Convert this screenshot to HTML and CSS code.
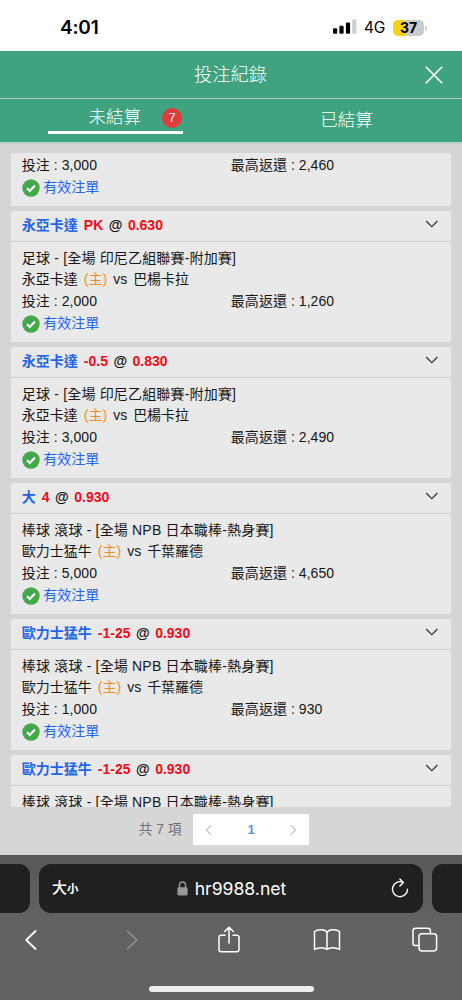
FILE: index.html
```html
<!DOCTYPE html>
<html lang="zh-Hant">
<head>
<meta charset="utf-8">
<meta name="viewport" content="width=device-width, initial-scale=1">
<title>投注紀錄</title>
<link rel="stylesheet" href="styles.css">
</head>
<body>
<svg class="defs" width="0" height="0">
  <symbol id="check" viewBox="0 0 18 18"><circle cx="9" cy="9" r="8.7" fill="#46a84c"/><path d="M5 9.3l2.8 2.7 5.2-5.4" fill="none" stroke="#fff" stroke-width="2.2"/></symbol>
  <symbol id="down" viewBox="0 0 14 8"><path d="M1.2 1l5.6 5.7L12.4 1" fill="none" stroke="#333" stroke-width="1.2"/></symbol>
</svg>
<div class="status">
  <span class="time">4:01</span>
  <svg class="signal" width="24" height="16" viewBox="0 0 24 16"><rect x="0" y="9.3" width="4.2" height="5.5" rx="1.2"/><rect x="6.4" y="6.8" width="4.2" height="8" rx="1.2"/><rect x="12.9" y="3.6" width="4.2" height="11.2" rx="1.2"/><rect x="19.2" y="0.2" width="4.2" height="14.6" rx="1.2" fill="#cfcfcf"/></svg>
  <span class="net">4G</span>
  <span class="battery">37</span><i class="nub"></i>
</div>
<header class="header">
  <h1>投注紀錄</h1>
  <svg class="close" width="18" height="18" viewBox="0 0 18 18"><path d="M.8.8l16.4 16.4M17.2.8L.8 17.2" stroke="#fff" stroke-width="1.6"/></svg>
</header>
<nav class="tabs">
  <div class="tab"><div class="active"><span>未結算</span><b class="badge">7</b></div></div>
  <div class="tab second">已結算</div>
</nav>
<main class="page">
  <div class="list">
    <section class="card partial">
      <div class="body">
        <div class="row split"><span>投注 : 3,000</span><span>最高返還 : 2,460</span></div>
        <div class="row valid"><svg><use href="#check"/></svg>有效注單</div>
      </div>
    </section>
    <section class="card">
      <div class="title"><span class="pick">永亞卡達</span><span class="red">PK</span><span class="at">@</span><span class="red">0.630</span><svg><use href="#down"/></svg></div>
      <div class="body">
        <div class="row league">足球 - [全場 印尼乙組聯賽-附加賽]</div>
        <div class="row teams"><span>永亞卡達</span><span class="home">(主)</span><span>vs</span><span>巴楊卡拉</span></div>
        <div class="row split"><span>投注 : 2,000</span><span>最高返還 : 1,260</span></div>
        <div class="row valid"><svg><use href="#check"/></svg>有效注單</div>
      </div>
    </section>
    <section class="card">
      <div class="title"><span class="pick">永亞卡達</span><span class="red">-0.5</span><span class="at">@</span><span class="red">0.830</span><svg><use href="#down"/></svg></div>
      <div class="body">
        <div class="row league">足球 - [全場 印尼乙組聯賽-附加賽]</div>
        <div class="row teams"><span>永亞卡達</span><span class="home">(主)</span><span>vs</span><span>巴楊卡拉</span></div>
        <div class="row split"><span>投注 : 3,000</span><span>最高返還 : 2,490</span></div>
        <div class="row valid"><svg><use href="#check"/></svg>有效注單</div>
      </div>
    </section>
    <section class="card">
      <div class="title"><span class="pick">大</span><span class="red">4</span><span class="at">@</span><span class="red">0.930</span><svg><use href="#down"/></svg></div>
      <div class="body">
        <div class="row league">棒球 滾球 - [全場 NPB 日本職棒-熱身賽]</div>
        <div class="row teams"><span>歐力士猛牛</span><span class="home">(主)</span><span>vs</span><span>千葉羅德</span></div>
        <div class="row split"><span>投注 : 5,000</span><span>最高返還 : 4,650</span></div>
        <div class="row valid"><svg><use href="#check"/></svg>有效注單</div>
      </div>
    </section>
    <section class="card">
      <div class="title"><span class="pick">歐力士猛牛</span><span class="red">-1-25</span><span class="at">@</span><span class="red">0.930</span><svg><use href="#down"/></svg></div>
      <div class="body">
        <div class="row league">棒球 滾球 - [全場 NPB 日本職棒-熱身賽]</div>
        <div class="row teams"><span>歐力士猛牛</span><span class="home">(主)</span><span>vs</span><span>千葉羅德</span></div>
        <div class="row split"><span>投注 : 1,000</span><span>最高返還 : 930</span></div>
        <div class="row valid"><svg><use href="#check"/></svg>有效注單</div>
      </div>
    </section>
    <section class="card">
      <div class="title"><span class="pick">歐力士猛牛</span><span class="red">-1-25</span><span class="at">@</span><span class="red">0.930</span><svg><use href="#down"/></svg></div>
      <div class="body">
        <div class="row league">棒球 滾球 - [全場 NPB 日本職棒-熱身賽]</div>
      </div>
    </section>
  </div>
  <div class="pager">
    <span class="total">共 7 項</span>
    <div class="pages">
      <svg width="8" height="12" viewBox="0 0 8 12"><path d="M6.3 1.2L1.5 6l4.8 4.8" fill="none" stroke="#bfc2c8" stroke-width="1.2"/></svg>
      <b>1</b>
      <svg width="8" height="12" viewBox="0 0 8 12"><path d="M1.7 1.2L6.5 6l-4.8 4.8" fill="none" stroke="#bfc2c8" stroke-width="1.2"/></svg>
    </div>
  </div>
</main>
<footer class="browser">
  <div class="bars">
    <div class="side left"></div>
    <div class="address">
      <span class="size">大<small>小</small></span>
      <span class="url"><svg width="11" height="15" viewBox="0 0 11 15"><rect x=".4" y="6.2" width="10.2" height="8.2" rx="1.4" fill="#98989b"/><path d="M2.5 7V4a3 3 0 0 1 6 0v3" fill="none" stroke="#98989b" stroke-width="1.4"/></svg>hr9988.net</span>
      <svg class="reload" width="18" height="20" viewBox="0 0 18 20"><path d="M12 4.300A7.500 7.500 0 1 0 16.500 11.200M8.900.900l3.500 3.500-3.500 3.700" fill="none" stroke="#fff" stroke-width="1.4" stroke-linecap="round" stroke-linejoin="round"/></svg>
    </div>
    <div class="side right"></div>
  </div>
  <div class="tools">
    <svg width="12" height="20" viewBox="0 0 12 20"><path d="M10.6 1L1.2 10l9.4 9" stroke-width="1.8"/></svg>
    <svg class="dim" width="12" height="20" viewBox="0 0 12 20"><path d="M1.4 1l9.4 9-9.4 9" stroke-width="1.5"/></svg>
    <svg width="22" height="28" viewBox="0 0 22 28"><path d="M7 9.3H3.2A2.2 2.2 0 0 0 1 11.5v12.1a2.2 2.2 0 0 0 2.2 2.2h15.6a2.2 2.2 0 0 0 2.2-2.2V11.5a2.2 2.2 0 0 0-2.2-2.2H15M11 17V1.4M6.700 5.500L11 1.200l4.300 4.300"/></svg>
    <svg width="28" height="24" viewBox="0 0 28 24"><path d="M14 4.500C12.500 1.200 5 .600 1.500 3.500v18c3.500-2.400 10-2.400 12.500 0 2.500-2.400 9-2.400 12.500 0v-18C23 .600 15.500 1.200 14 4.500zM14 4.500v17"/></svg>
    <svg width="26" height="26" viewBox="0 0 26 26"><path d="M7 18.600H3.600A2.600 2.600 0 0 1 1 16V3.800a2.600 2.600 0 0 1 2.600-2.600h12.200a2.600 2.600 0 0 1 2.600 2.600V6.600"/><rect x="7" y="6.700" width="17.600" height="17.200" rx="2.800"/></svg>
  </div>
  <div class="home-bar"></div>
</footer>
</body>
</html>
```
FILE: styles.css
```css
* { box-sizing: border-box; }
body { margin: 0; width: 462px; height: 1000px; overflow: hidden; display: flex; flex-direction: column; background: #d6d6d6; font: 14px/21.7px "Liberation Sans", "Noto Sans CJK TC", sans-serif; color: #161616; white-space: nowrap; }
svg { display: block; flex: none; }
.defs { position: absolute; }
.status { height: 51px; flex: none; background: #fff; display: flex; align-items: center; padding: 5px 34px 0 60px; color: #000; }
.time { font: 600 19px/24px Inter, sans-serif; width: 273px; letter-spacing: -.2px; }
.signal { margin-top: -2px; }
.net { font: 400 15.5px/20px Inter, sans-serif; margin-left: 7px; width: 22px; letter-spacing: -.3px; }
.battery { width: 31px; height: 16px; border-radius: 5px; margin-left: 7px; background: linear-gradient(90deg, #fbd212 38%, #cbcbcb 38%); font: 700 14px/16px Inter, sans-serif; text-align: center; }
.nub { width: 2px; height: 5px; background: #d0d0d0; border-radius: 0 2px 2px 0; margin-left: 1px; }
.header { height: 48px; flex: none; background: #40a380; border-bottom: 1px solid #b9c9c3; display: grid; grid-template-columns: 1fr auto 1fr; align-items: center; color: #fff; }
.header h1 { grid-column: 2; margin: 0 1px 0 0; font-size: 18.3px; font-weight: 300; line-height: 26px; }
.close { justify-self: end; margin-right: 19px; }
.tabs { height: 45px; flex: none; background: #40a380; border-bottom: 2px solid #c1cfc9; display: flex; color: #fff; font-size: 17.5px; font-weight: 300; }
.tab { flex: 1; display: flex; justify-content: center; }
.active { width: 135px; height: 35px; border-bottom: 3px solid #fff; display: flex; align-items: center; padding: 5px 0 0 40.5px; gap: 21px; }
.badge { width: 20px; height: 20px; border-radius: 50%; background: #e03c3c; font-size: 12px; font-weight: 400; line-height: 20px; text-align: center; }
.second { align-items: center; }
.page { height: 711px; flex: none; padding: 9px 11px 0; }
.list { height: 654px; overflow: hidden; display: flex; flex-direction: column; gap: 5px; }
.card { height: 131px; flex: none; background: #e9e9e9; }
.partial { height: 52.5px; }
.title { height: 31px; display: flex; align-items: center; gap: 5.5px; padding: 0 12px 0 10.8px; border-bottom: 1px solid #cecece; font-weight: 700; color: #111; }
.title svg { width: 14px; height: 8px; margin-left: auto; margin-top: -3px; }
.title .pick { margin-right: .5px; }
.pick, .valid { color: #1f65ed; }
.red { color: #f50b16; }
.body { padding: 6px 11px 0 10.8px; }
.partial .body { padding-top: 1.5px; }
.row { height: 21.7px; }
.league { letter-spacing: .18px; }
.teams { display: flex; gap: 6px; }
.home { color: #ff8c1a; }
.split { display: grid; grid-template-columns: 209px 1fr; }
.split span { letter-spacing: .05px; }
.row.valid { display: flex; align-items: center; gap: 3.5px; height: 23px; }
.valid svg { width: 18px; height: 18px; }
.pager { display: flex; align-items: center; padding: 7px 0 0 127.5px; gap: 11px; }
.total { width: 43.5px; color: #707175; font-size: 13.8px; }
.pages { width: 116px; height: 31px; background: #fff; display: flex; align-items: center; justify-content: space-between; padding: 0 12px; }
.pages b { font-size: 13px; color: #469bea; }
.browser { flex: 1; background: linear-gradient(#585858, #626262 45%); padding-top: 9px; }
.bars { display: flex; gap: 9px; height: 49px; }
.side { width: 30px; background: #202020; }
.left { border-radius: 0 11px 11px 0; }
.right { border-radius: 11px 0 0 11px; }
.address { flex: 1; border-radius: 12px; background: #202020; color: #fff; display: grid; grid-template-columns: 1fr auto 1fr; align-items: center; padding: 0 14px 0 13px; }
.size { font-size: 15px; font-weight: 500; }
.size small { font-size: 11.5px; font-weight: 700; }
.url { display: flex; align-items: center; gap: 7px; margin-left: 2px; font: 400 17.6px/24px Inter, sans-serif; }
.reload { justify-self: end; margin-top: -2px; }
.tools { display: grid; grid-template-columns: 62px 140px 54px 142px 54px; align-items: center; justify-items: center; height: 52px; padding-top: 2px; }
.tools svg { fill: none; stroke: #fff; stroke-width: 1.5; stroke-linecap: round; stroke-linejoin: round; }
.tools .dim { stroke: #929292; }
.home-bar { width: 165px; height: 6px; margin: 21px auto 0; border-radius: 3px; background: #ececec; }
```
